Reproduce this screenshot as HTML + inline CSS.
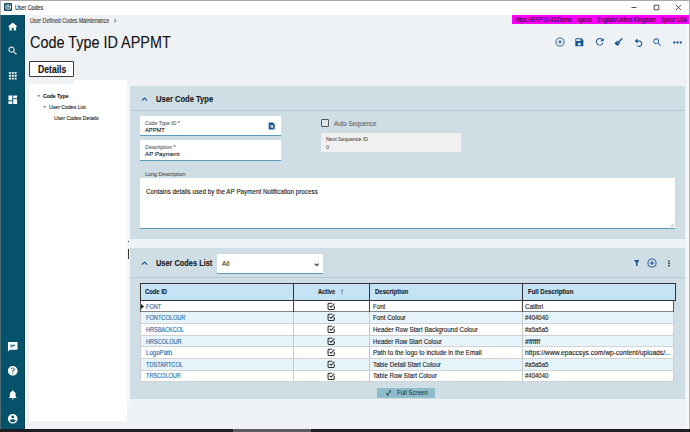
<!DOCTYPE html><html><head><meta charset="utf-8"><title>User Codes</title><style>
html,body{margin:0;padding:0}
body{width:690px;height:432px;overflow:hidden;position:relative;background:#eef2f5;font-family:"Liberation Sans", sans-serif}
div,svg,span{position:absolute;box-sizing:border-box}
span{white-space:nowrap;line-height:1;transform-origin:0 0;-webkit-text-stroke:0.12px}

</style></head><body>
<div style="left:0px;top:0px;width:690px;height:15px;background:#fff;"></div>
<div style="left:0px;top:0px;width:690px;height:1px;background:#a9a9a9;"></div>
<div style="left:0px;top:0px;width:1px;height:432px;background:#b9b9b9;"></div>
<div style="left:687px;top:24px;width:2px;height:405px;background:#f8fafb;"></div>
<div style="left:689px;top:0px;width:1px;height:432px;background:#b3b3b3;"></div>
<svg style="left:4px;top:3px" width="8" height="8" viewBox="0 0 24 24" fill="#fff" ><rect x="0" y="0" width="24" height="24" rx="4" fill="#0c4a5e"/><rect x="5.500" y="6" width="14" height="12.500" rx="2.500" fill="none" stroke="#fff" stroke-width="2.600"/><path d="M9 10.500h8M9 14.500h8" stroke="#fff" stroke-width="2"/></svg>
<svg style="left:630px;top:3px" width="54" height="9" viewBox="0 0 54 9" fill="#fff" ><path d="M1.500 4.500h5M24.200 2.200h4.600v4.600h-4.600zM46 2l5 5M51 2l-5 5" fill="none" stroke="#222" stroke-width="0.800"/></svg>
<div style="left:0px;top:15px;width:1px;height:414px;background:#4a6b74;"></div>
<div style="left:1px;top:15px;width:23px;height:414px;background:#06526a;"></div>
<div style="left:24px;top:15px;width:1px;height:414px;background:#0b4256;"></div>
<div style="left:25px;top:15px;width:1.3px;height:414px;background:#f9fbfc;"></div>
<svg style="left:6.85px;top:21.25px" width="11.5" height="11.5" viewBox="0 0 24 24" fill="#fff" ><path d="M10 20v-6h4v6h5v-8h3L12 3 2 12h3v8z"/></svg>
<svg style="left:6.85px;top:45.25px" width="11.5" height="11.5" viewBox="0 0 24 24" fill="#fff" ><path d="M15.5 14h-.79l-.28-.27C15.41 12.59 16 11.11 16 9.5 16 5.91 13.09 3 9.500 3S3 5.910 3 9.500 5.910 16 9.500 16c1.610 0 3.090-.59 4.230-1.570l.27.28v.79l5 4.990L20.490 19l-4.990-5zm-6 0C7.010 14 5 11.990 5 9.500S7.010 5 9.500 5 14 7.010 14 9.500 11.990 14 9.500 14z"/></svg>
<svg style="left:6.85px;top:69.75px" width="11.5" height="11.5" viewBox="0 0 24 24" fill="#fff" ><path d="M4 8h4V4H4v4zm6 12h4v-4h-4v4zm-6 0h4v-4H4v4zm0-6h4v-4H4v4zm6 0h4v-4h-4v4zm6-10v4h4V4h-4zm-6 4h4V4h-4v4zm6 6h4v-4h-4v4zm0 6h4v-4h-4v4z"/></svg>
<svg style="left:6.85px;top:93.75px" width="11.5" height="11.5" viewBox="0 0 24 24" fill="#fff" ><path d="M3 13h8V3H3v10zm0 8h8v-6H3v6zm10 0h8V11h-8v10zm0-18v6h8V3h-8z"/></svg>
<svg style="left:6.85px;top:341.25px" width="11.5" height="11.5" viewBox="0 0 24 24" fill="#fff" ><path d="M20 2H4c-1.100 0-1.990.9-1.990 2L2 22l4-4h14c1.100 0 2-.9 2-2V4c0-1.100-.9-2-2-2zM7 8h10v1.800H7zm0 3.500h7v1.800H7z"/></svg>
<svg style="left:6.85px;top:365.25px" width="11.5" height="11.5" viewBox="0 0 24 24" fill="#fff" ><path d="M12 2C6.480 2 2 6.480 2 12s4.480 10 10 10 10-4.480 10-10S17.520 2 12 2zm1 17h-2v-2h2v2zm2.070-7.750l-.9.92C13.450 12.900 13 13.500 13 15h-2v-.5c0-1.100.45-2.100 1.170-2.830l1.240-1.260c.37-.36.59-.86.59-1.410 0-1.100-.9-2-2-2s-2 .9-2 2H8c0-2.210 1.790-4 4-4s4 1.790 4 4c0 .88-.36 1.680-.93 2.250z"/></svg>
<svg style="left:6.85px;top:389.25px" width="11.5" height="11.5" viewBox="0 0 24 24" fill="#fff" ><path d="M12 22c1.100 0 2-.9 2-2h-4c0 1.100.89 2 2 2zm6-6v-5c0-3.070-1.640-5.640-4.500-6.320V4c0-.83-.67-1.500-1.500-1.500s-1.500.67-1.500 1.500v.68C7.630 5.360 6 7.920 6 11v5l-2 2v1h16v-1l-2-2z"/></svg>
<svg style="left:6.85px;top:413.25px" width="11.5" height="11.5" viewBox="0 0 24 24" fill="#fff" ><path d="M12 2C6.480 2 2 6.480 2 12s4.480 10 10 10 10-4.480 10-10S17.520 2 12 2zm0 3c1.660 0 3 1.340 3 3s-1.340 3-3 3-3-1.340-3-3 1.340-3 3-3zm0 14.200c-2.500 0-4.710-1.280-6-3.220.03-1.990 4-3.080 6-3.080 1.990 0 5.970 1.090 6 3.080-1.290 1.940-3.500 3.220-6 3.220z"/></svg>
<div style="left:0px;top:429px;width:690px;height:3px;background:#1d1d21;"></div>
<div style="left:233px;top:429px;width:78px;height:3px;background:#5c5c5c;"></div>
<div style="left:511.5px;top:15px;width:177.5px;height:9px;background:#ff00ff;"></div>
<svg style="left:554.9px;top:37.4px" width="10" height="10" viewBox="0 0 10 10" fill="#fff" ><circle cx="5" cy="5" r="4.050" fill="none" stroke="#175493" stroke-width="0.850"/><path d="M5 3.100v3.800M3.100 5h3.800" stroke="#175493" stroke-width="0.900" fill="none"/></svg>
<svg style="left:574.4499999999999px;top:36.85px" width="10.7" height="10.7" viewBox="0 0 24 24" fill="#175493" ><path d="M17 3H5c-1.110 0-2 .9-2 2v14c0 1.100.89 2 2 2h14c1.100 0 2-.9 2-2V7l-4-4zm-5 16c-1.660 0-3-1.340-3-3s1.340-3 3-3 3 1.340 3 3-1.340 3-3 3zm3-10H5V5h10v4z"/></svg>
<svg style="left:593.75px;top:36.45px" width="11.5" height="11.5" viewBox="0 0 24 24" fill="#175493" ><path d="M17.650 6.350C16.200 4.900 14.210 4 12 4c-4.420 0-7.990 3.580-7.990 8s3.570 8 7.990 8c3.730 0 6.840-2.550 7.730-6h-2.080c-.82 2.330-3.040 4-5.650 4-3.310 0-6-2.690-6-6s2.690-6 6-6c1.660 0 3.140.69 4.220 1.780L13 11h7V4l-2.350 2.350z"/></svg>
<svg style="left:651.9000000000001px;top:36.900000000000006px" width="10.6" height="10.6" viewBox="0 0 24 24" fill="#175493" ><path d="M15.5 14h-.79l-.28-.27C15.41 12.59 16 11.11 16 9.5 16 5.91 13.09 3 9.500 3S3 5.910 3 9.500 5.910 16 9.500 16c1.610 0 3.090-.59 4.230-1.570l.27.28v.79l5 4.990L20.490 19l-4.990-5zm-6 0C7.010 14 5 11.990 5 9.500S7.010 5 9.500 5 14 7.010 14 9.500 11.990 14 9.500 14z"/></svg>
<svg style="left:614px;top:38px" width="9" height="8.5" viewBox="0 0 9 8.500" fill="#fff" ><path d="M7.900 0.700L4.600 4.300" stroke="#175493" stroke-width="1.300" stroke-linecap="round" fill="none"/><path d="M3.300 2.600L6.300 5.400 3.400 8.100 0.400 5.300z" fill="#175493"/><path d="M2.400 3.500l3 2.800" stroke="#eef2f5" stroke-width="0.500"/></svg>
<svg style="left:634px;top:37.5px" width="9" height="9" viewBox="0 0 9 9" fill="#fff" ><path d="M2.200 3.100H4.700A2.650 2.650 0 1 1 3.600 7.900" fill="none" stroke="#175493" stroke-width="1.050"/><path d="M3.500 0.600L0.800 3.100 3.500 5.600z" fill="#175493"/><circle cx="2.300" cy="7.600" r="0.450" fill="#175493"/></svg>
<svg style="left:672.5px;top:41.1px" width="9" height="3" viewBox="0 0 9 3" fill="#175493" ><circle cx="1.300" cy="1.500" r="1.150"/><circle cx="4.500" cy="1.500" r="1.150"/><circle cx="7.700" cy="1.500" r="1.150"/></svg>
<div style="left:29px;top:61px;width:45px;height:16px;background:#fff;border:1px solid #3a3a3a;border-radius:1px"></div>
<div style="left:29px;top:84px;width:97.5px;height:337px;background:#fff;"></div>
<div style="left:74px;top:80px;width:52.5px;height:5px;background:#fff;"></div>
<div style="left:126.5px;top:86px;width:3.5px;height:321px;background:#f3f6f8;"></div>
<svg style="left:37px;top:94.8px" width="3.4" height="2.6" viewBox="0 0 4 3" fill="#999" ><path d="M0 0h4L2 2.600z"/></svg>
<svg style="left:43px;top:105.6px" width="3.4" height="2.6" viewBox="0 0 4 3" fill="#999" ><path d="M0 0h4L2 2.600z"/></svg>
<div style="left:127.5px;top:248.5px;width:1px;height:10.5px;background:#333;"></div>
<div style="left:127.5px;top:241px;width:1px;height:1px;background:#333;"></div>
<div style="left:130px;top:86px;width:555px;height:152.5px;background:#cfdee5;"></div>
<div style="left:130px;top:110px;width:555px;height:1px;background:#b0cddb;"></div>
<svg style="left:140.8px;top:96.6px" width="7" height="4.7" viewBox="0 0 8 5.400" fill="#fff" ><path d="M1 4.200L4 1.200 7 4.200" fill="none" stroke="#175493" stroke-width="1.200"/></svg>
<div style="left:140px;top:116px;width:141px;height:19.5px;background:#fff;border-bottom:1px solid #5b9bc2"></div>
<div style="left:140px;top:140px;width:141px;height:21px;background:#fff;border-bottom:1px solid #5b9bc2"></div>
<svg style="left:267.5px;top:122px" width="7.5" height="8" viewBox="0 0 22 23" fill="#fff" ><path d="M4 1h10l6 6v13a2 2 0 0 1-2 2H4a2 2 0 0 1-2-2V3a2 2 0 0 1 2-2z" fill="#175493"/><circle cx="11" cy="12.500" r="4.300" fill="#fff"/><circle cx="11" cy="12.500" r="1.800" fill="#175493"/><path d="M14 15.500l4 4" stroke="#fff" stroke-width="2.600"/></svg>
<div style="left:321.2px;top:118.7px;width:8.3px;height:8.3px;background:#dbe6eb;border:1px solid #555;border-radius:1px"></div>
<div style="left:321.2px;top:132.7px;width:140.3px;height:19.2px;background:#f0f0f0;"></div>
<div style="left:140px;top:178px;width:534.5px;height:51px;background:#fff;border-bottom:1px solid #5b9bc2"></div>
<svg style="left:670px;top:223px" width="4" height="4" viewBox="0 0 4 4" fill="#fff" ><path d="M3.800 0.500L0.500 3.800M3.800 2.300L2.300 3.800" stroke="#888" stroke-width="0.600"/></svg>
<div style="left:130px;top:248px;width:555px;height:150.5px;background:#cfdee5;"></div>
<div style="left:130px;top:277px;width:555px;height:1px;background:#b0cddb;"></div>
<svg style="left:140.8px;top:261px" width="7" height="4.7" viewBox="0 0 8 5.400" fill="#fff" ><path d="M1 4.200L4 1.200 7 4.200" fill="none" stroke="#175493" stroke-width="1.200"/></svg>
<div style="left:216.7px;top:253.5px;width:106.3px;height:20.3px;background:#fff;border-bottom:1px solid #5b9bc2"></div>
<svg style="left:313.5px;top:262.9px" width="5.4" height="3.6" viewBox="0 0 5.400 3.600" fill="#fff" ><path d="M0.700 0.700L2.700 2.700 4.700 0.700" fill="none" stroke="#333" stroke-width="1.100"/></svg>
<svg style="left:633.6px;top:259.9px" width="5.6" height="6.2" viewBox="0 0 5.600 6.200" fill="#175493" ><path d="M0 0h5.600L3.500 2.900V6.200H2.100V2.900z"/></svg>
<svg style="left:647.4px;top:258px" width="10" height="10" viewBox="0 0 10 10" fill="#fff" ><circle cx="5" cy="5" r="4.050" fill="none" stroke="#175493" stroke-width="0.950"/><path d="M5 2.900v4.200M2.900 5h4.200" stroke="#175493" stroke-width="1" fill="none"/></svg>
<svg style="left:668px;top:260.4px" width="2" height="7" viewBox="0 0 2 7" fill="#222" ><circle cx="1" cy="1" r="0.850"/><circle cx="1" cy="3.300" r="0.850"/><circle cx="1" cy="5.600" r="0.850"/></svg>
<div style="left:140px;top:283px;width:535.5px;height:18px;background:#c4e4f6;border:1px solid #333"></div>
<div style="left:293px;top:283px;width:1px;height:18px;background:#333;"></div>
<div style="left:369px;top:283px;width:1px;height:18px;background:#333;"></div>
<div style="left:522px;top:283px;width:1px;height:18px;background:#333;"></div>
<div style="left:140px;top:301px;width:534.0px;height:11px;background:#fff;"></div>
<div style="left:140px;top:311px;width:534.0px;height:1px;background:#d2d2d2;"></div>
<div style="left:140px;top:312px;width:534.0px;height:12px;background:#e7f4fb;"></div>
<div style="left:140px;top:323px;width:534.0px;height:1px;background:#d2d2d2;"></div>
<div style="left:140px;top:324px;width:534.0px;height:12px;background:#fff;"></div>
<div style="left:140px;top:335px;width:534.0px;height:1px;background:#d2d2d2;"></div>
<div style="left:140px;top:336px;width:534.0px;height:11px;background:#e7f4fb;"></div>
<div style="left:140px;top:346px;width:534.0px;height:1px;background:#d2d2d2;"></div>
<div style="left:140px;top:347px;width:534.0px;height:12px;background:#fff;"></div>
<div style="left:140px;top:358px;width:534.0px;height:1px;background:#d2d2d2;"></div>
<div style="left:140px;top:359px;width:534.0px;height:12px;background:#e7f4fb;"></div>
<div style="left:140px;top:370px;width:534.0px;height:1px;background:#d2d2d2;"></div>
<div style="left:140px;top:371px;width:534.0px;height:11px;background:#fff;"></div>
<div style="left:140px;top:381px;width:534.0px;height:1px;background:#d2d2d2;"></div>
<div style="left:140px;top:301px;width:1px;height:81px;background:#cdcdcd;"></div>
<div style="left:673.0px;top:301px;width:1px;height:81px;background:#cdcdcd;"></div>
<div style="left:293px;top:301px;width:1px;height:81px;background:#c9c9c9;"></div>
<div style="left:369px;top:301px;width:1px;height:81px;background:#c9c9c9;"></div>
<div style="left:522px;top:301px;width:1px;height:81px;background:#c9c9c9;"></div>
<div style="left:140px;top:311px;width:534.0px;height:1px;background:#858585;"></div>
<div style="left:140px;top:301px;width:1px;height:11px;background:#555;"></div>
<div style="left:673.0px;top:301px;width:1px;height:11px;background:#555;"></div>
<div style="left:293px;top:301px;width:1px;height:11px;background:#444;"></div>
<div style="left:369px;top:301px;width:1px;height:11px;background:#444;"></div>
<div style="left:522px;top:301px;width:1px;height:11px;background:#444;"></div>
<svg style="left:140.5px;top:303.5px" width="3" height="5" viewBox="0 0 3 5" fill="#111" ><path d="M0 0L3 2.500 0 5z"/></svg>
<svg style="left:340px;top:288.8px" width="4" height="6" viewBox="0 0 4 6" fill="#fff" ><path d="M2.100 0.700V5.500M0.900 2L2.100 0.700 3.300 2" fill="none" stroke="#666" stroke-width="0.600"/></svg>
<svg style="left:327px;top:301.7px" width="8.5" height="8.5" viewBox="0 0 24 24" fill="#fff" ><path d="M15 3.500H5.500a2.500 2.500 0 0 0-2.500 2.500v12.500A2.500 2.500 0 0 0 5.500 21H18a2.500 2.500 0 0 0 2.500-2.500V11" fill="none" stroke="#2a2a2a" stroke-width="2.900"/><path d="M7.500 11l4 4L21 4.500" fill="none" stroke="#2a2a2a" stroke-width="2.900"/></svg>
<svg style="left:327px;top:312.7px" width="8.5" height="8.5" viewBox="0 0 24 24" fill="#fff" ><path d="M15 3.500H5.500a2.500 2.500 0 0 0-2.500 2.500v12.500A2.500 2.500 0 0 0 5.500 21H18a2.500 2.500 0 0 0 2.500-2.500V11" fill="none" stroke="#2a2a2a" stroke-width="2.900"/><path d="M7.500 11l4 4L21 4.500" fill="none" stroke="#2a2a2a" stroke-width="2.900"/></svg>
<svg style="left:327px;top:324.7px" width="8.5" height="8.5" viewBox="0 0 24 24" fill="#fff" ><path d="M15 3.500H5.500a2.500 2.500 0 0 0-2.500 2.500v12.500A2.500 2.500 0 0 0 5.500 21H18a2.500 2.500 0 0 0 2.500-2.500V11" fill="none" stroke="#2a2a2a" stroke-width="2.900"/><path d="M7.500 11l4 4L21 4.500" fill="none" stroke="#2a2a2a" stroke-width="2.900"/></svg>
<svg style="left:327px;top:336.7px" width="8.5" height="8.5" viewBox="0 0 24 24" fill="#fff" ><path d="M15 3.500H5.500a2.500 2.500 0 0 0-2.500 2.500v12.500A2.500 2.500 0 0 0 5.500 21H18a2.500 2.500 0 0 0 2.500-2.500V11" fill="none" stroke="#2a2a2a" stroke-width="2.900"/><path d="M7.500 11l4 4L21 4.500" fill="none" stroke="#2a2a2a" stroke-width="2.900"/></svg>
<svg style="left:327px;top:347.7px" width="8.5" height="8.5" viewBox="0 0 24 24" fill="#fff" ><path d="M15 3.500H5.500a2.500 2.500 0 0 0-2.500 2.500v12.500A2.500 2.500 0 0 0 5.500 21H18a2.500 2.500 0 0 0 2.500-2.500V11" fill="none" stroke="#2a2a2a" stroke-width="2.900"/><path d="M7.500 11l4 4L21 4.500" fill="none" stroke="#2a2a2a" stroke-width="2.900"/></svg>
<svg style="left:327px;top:359.7px" width="8.5" height="8.5" viewBox="0 0 24 24" fill="#fff" ><path d="M15 3.500H5.500a2.500 2.500 0 0 0-2.500 2.500v12.500A2.500 2.500 0 0 0 5.500 21H18a2.500 2.500 0 0 0 2.500-2.500V11" fill="none" stroke="#2a2a2a" stroke-width="2.900"/><path d="M7.500 11l4 4L21 4.500" fill="none" stroke="#2a2a2a" stroke-width="2.900"/></svg>
<svg style="left:327px;top:371.7px" width="8.5" height="8.5" viewBox="0 0 24 24" fill="#fff" ><path d="M15 3.500H5.500a2.500 2.500 0 0 0-2.500 2.500v12.500A2.500 2.500 0 0 0 5.500 21H18a2.500 2.500 0 0 0 2.500-2.500V11" fill="none" stroke="#2a2a2a" stroke-width="2.900"/><path d="M7.500 11l4 4L21 4.500" fill="none" stroke="#2a2a2a" stroke-width="2.900"/></svg>
<div style="left:377.3px;top:387.6px;width:57.4px;height:10.9px;background:#8fbccb;"></div>
<svg style="left:385.7px;top:389.8px" width="5.8" height="5.8" viewBox="0 0 7 7" fill="#fff" ><path d="M1 6L6 1M3.200 1H6v2.800M1 3.200V6h2.800" fill="none" stroke="#1b2b33" stroke-width="0.900"/></svg>
<span style="left:14.8px;top:5px;font-size:6.5px;font-weight:400;color:#1a1a1a;transform:scaleX(0.8186)">User Codes</span>
<span style="left:29.8px;top:18px;font-size:6.3px;font-weight:400;color:#3c3c3c;transform:scaleX(0.8369)">User Defined Codes Maintenance</span>
<span style="left:114px;top:18px;font-size:6.3px;font-weight:400;color:#3c3c3c;transform:scaleX(0.6237)">&gt;</span>
<span style="left:29.8px;top:35px;font-size:15.6px;font-weight:400;color:#141414;transform:scaleX(0.924)">Code Type ID APPMT</span>
<span style="left:37.7px;top:65px;font-size:10.0px;font-weight:700;color:#111;transform:scaleX(0.8629)">Details</span>
<span style="left:42.5px;top:93px;font-size:6.2px;font-weight:700;color:#222;transform:scaleX(0.818)">Code Type</span>
<span style="left:48.5px;top:104px;font-size:6.2px;font-weight:400;color:#222;transform:scaleX(0.8335)">User Codes List</span>
<span style="left:54.3px;top:115px;font-size:6.2px;font-weight:400;color:#222;transform:scaleX(0.8385)">User Codes Details</span>
<span style="left:155.6px;top:95px;font-size:8.6px;font-weight:700;color:#1a1a1a;transform:scaleX(0.8812)">User Code Type</span>
<span style="left:145.0px;top:121px;font-size:5.9px;font-weight:400;color:#666;transform:scaleX(0.8734)">Code Type ID *</span>
<span style="left:145.0px;top:127px;font-size:6.0px;font-weight:400;color:#222;transform:scaleX(0.9627)">APPMT</span>
<span style="left:145.0px;top:145px;font-size:5.9px;font-weight:400;color:#666;transform:scaleX(0.913)">Description *</span>
<span style="left:145.0px;top:151px;font-size:6.0px;font-weight:400;color:#222;transform:scaleX(1.0376)">AP Payment</span>
<span style="left:334.3px;top:121px;font-size:6.8px;font-weight:400;color:#666;transform:scaleX(0.9121)">Auto Sequence</span>
<span style="left:326.3px;top:137px;font-size:5.9px;font-weight:400;color:#555;transform:scaleX(0.8805)">Next Sequence ID</span>
<span style="left:326.3px;top:144px;font-size:6.0px;font-weight:400;color:#666;transform:scaleX(0.8972)">0</span>
<span style="left:145.1px;top:172px;font-size:5.9px;font-weight:400;color:#555;transform:scaleX(0.9159)">Long Description</span>
<span style="left:145.8px;top:189px;font-size:6.4px;font-weight:400;color:#222;transform:scaleX(0.9836)">Contains details used by the AP Payment Notification process</span>
<span style="left:155.7px;top:259px;font-size:8.6px;font-weight:700;color:#1a1a1a;transform:scaleX(0.8604)">User Codes List</span>
<span style="left:221.6px;top:261px;font-size:6.4px;font-weight:400;color:#333;transform:scaleX(1.0409)">All</span>
<span style="left:145.3px;top:289px;font-size:6.7px;font-weight:700;color:#1a1a1a;transform:scaleX(0.8747)">Code ID</span>
<span style="left:317.5px;top:289px;font-size:6.7px;font-weight:700;color:#1a1a1a;transform:scaleX(0.8517)">Active</span>
<span style="left:374.7px;top:289px;font-size:6.7px;font-weight:700;color:#1a1a1a;transform:scaleX(0.905)">Description</span>
<span style="left:528.0px;top:289px;font-size:6.7px;font-weight:700;color:#1a1a1a;transform:scaleX(0.8962)">Full Description</span>
<span style="left:396.8px;top:390px;font-size:6.6px;font-weight:400;color:#27414d;transform:scaleX(0.9233)">Full Screen</span>
<span style="left:514.5px;top:17px;font-size:6.3px;font-weight:400;color:#200020;transform:scaleX(0.8571)">https://ERP10-01/Demo</span>
<span style="left:577px;top:17px;font-size:6.3px;font-weight:400;color:#200020;transform:scaleX(0.8743)">epicor</span>
<span style="left:597px;top:17px;font-size:6.3px;font-weight:400;color:#200020;transform:scaleX(0.8673)">English/United Kingdom</span>
<span style="left:661.2px;top:17px;font-size:6.3px;font-weight:400;color:#200020;transform:scaleX(0.7927)">Epicor USA</span>
<span style="left:145.8px;top:304px;font-size:6.3px;font-weight:400;color:#2568a4;transform:scaleX(0.8868)">FONT</span>
<span style="left:372.6px;top:304px;font-size:6.3px;font-weight:400;color:#222;transform:scaleX(0.9755)">Font</span>
<span style="left:524.8px;top:304px;font-size:6.3px;font-weight:400;color:#222;transform:scaleX(1.0191)">Calibri</span>
<span style="left:145.8px;top:315px;font-size:6.3px;font-weight:400;color:#2568a4;transform:scaleX(0.8936)">FONTCOLOUR</span>
<span style="left:372.6px;top:315px;font-size:6.3px;font-weight:400;color:#222;transform:scaleX(0.9937)">Font Colour</span>
<span style="left:524.8px;top:315px;font-size:6.3px;font-weight:400;color:#222;transform:scaleX(0.9504)">#404040</span>
<span style="left:145.8px;top:327px;font-size:6.3px;font-weight:400;color:#2568a4;transform:scaleX(0.8781)">HRSBACKCOL</span>
<span style="left:372.6px;top:327px;font-size:6.3px;font-weight:400;color:#222;transform:scaleX(0.9924)">Header Row Start Background Colour</span>
<span style="left:524.8px;top:327px;font-size:6.3px;font-weight:400;color:#222;transform:scaleX(0.9504)">#a5a5a5</span>
<span style="left:145.8px;top:339px;font-size:6.3px;font-weight:400;color:#2568a4;transform:scaleX(0.8845)">HRSCOLOUR</span>
<span style="left:372.6px;top:339px;font-size:6.3px;font-weight:400;color:#222;transform:scaleX(0.9793)">Header Row Start Colour</span>
<span style="left:524.8px;top:339px;font-size:6.3px;font-weight:400;color:#222;transform:scaleX(1.1312)">#ffffff</span>
<span style="left:145.8px;top:350px;font-size:6.3px;font-weight:400;color:#2568a4;transform:scaleX(0.9715)">LogoPath</span>
<span style="left:372.6px;top:350px;font-size:6.3px;font-weight:400;color:#222;transform:scaleX(1.0105)">Path to the logo to include in the Email</span>
<span style="left:524.8px;top:350px;font-size:6.3px;font-weight:400;color:#222;transform:scaleX(1.0612)">https://www.epaccsys.com/wp-content/uploads/...</span>
<span style="left:145.8px;top:362px;font-size:6.3px;font-weight:400;color:#2568a4;transform:scaleX(0.8912)">TDSTARTCOL</span>
<span style="left:372.6px;top:362px;font-size:6.3px;font-weight:400;color:#222;transform:scaleX(0.9949)">Table Detail Start Colour</span>
<span style="left:524.8px;top:362px;font-size:6.3px;font-weight:400;color:#222;transform:scaleX(0.9504)">#a5a5a5</span>
<span style="left:145.8px;top:373px;font-size:6.3px;font-weight:400;color:#2568a4;transform:scaleX(0.88)">TRSCOLOUR</span>
<span style="left:372.6px;top:373px;font-size:6.3px;font-weight:400;color:#222;transform:scaleX(0.9884)">Table Row Start Colour</span>
<span style="left:524.8px;top:373px;font-size:6.3px;font-weight:400;color:#222;transform:scaleX(0.9504)">#404040</span>
</body></html>
